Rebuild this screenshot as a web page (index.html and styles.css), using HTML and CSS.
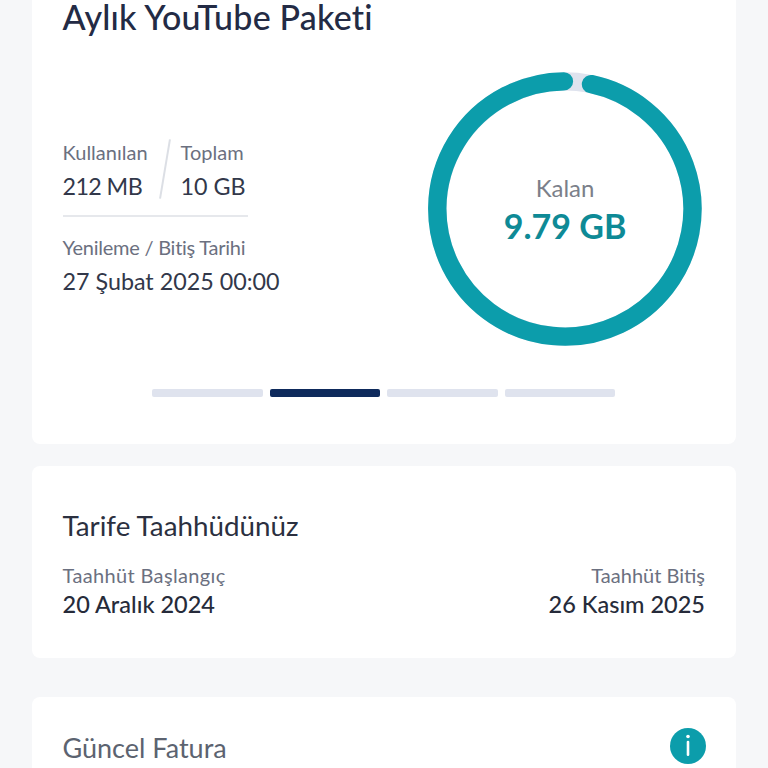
FILE: index.html
```html
<!DOCTYPE html>
<html lang="tr">
<head>
  <meta charset="UTF-8" />
  <meta name="viewport" content="width=device-width, initial-scale=1.0"/>
  <title>Aylık YouTube Paketi</title>
  <link rel="stylesheet" href="styles.css">
</head>
<body>
  <div class="page">
    <div class="card package">
      <h1 class="package-title">Aylık YouTube Paketi</h1>
      <div class="package-row">
        <div class="usage">
          <div class="usage-top">
            <div class="usage-col">
              <div class="label">Kullanılan</div>
              <div class="value value-narrow">212 MB</div>
            </div>
            <div class="slash"></div>
            <div class="usage-col">
              <div class="label">Toplam</div>
              <div class="value">10 GB</div>
            </div>
          </div>
          <div class="usage-bottom">
            <div class="label label-tight">Yenileme / Bitiş Tarihi</div>
            <div class="value">27 Şubat 2025 00:00</div>
          </div>
        </div>
        <div class="ring">
          <svg class="ring-svg" width="274" height="274" viewBox="0 0 274 274">
            <circle cx="137" cy="137" r="127.6" fill="none" stroke="#dfe3ee" stroke-width="18.4"/>
            <path d="M 163 12.1 A 127.6 127.6 0 1 1 135.9 9.4" fill="none" stroke="#0c9dab" stroke-width="18.4" stroke-linecap="round"/>
          </svg>
          <div class="ring-text">
            <div class="ring-label">Kalan</div>
            <div class="ring-value">9.79 GB</div>
          </div>
        </div>
      </div>
      <div class="pager">
        <span class="pager-bar"></span>
        <span class="pager-bar active"></span>
        <span class="pager-bar"></span>
        <span class="pager-bar"></span>
      </div>
    </div>

    <div class="card commitment">
      <h2 class="commitment-title">Tarife Taahhüdünüz</h2>
      <div class="commitment-row">
        <div>
          <div class="label label-wide">Taahhüt Başlangıç</div>
          <div class="date">20 Aralık 2024</div>
        </div>
        <div class="right">
          <div class="label">Taahhüt Bitiş</div>
          <div class="date">26 Kasım 2025</div>
        </div>
      </div>
    </div>

    <div class="card invoice">
      <h2 class="invoice-title">Güncel Fatura</h2>
      <svg class="info-icon" width="36" height="36" viewBox="0 0 36 36">
        <circle cx="18" cy="18" r="18" fill="#0c9dab"/>
        <circle cx="18" cy="8.5" r="1.8" fill="#fff"/>
        <rect x="16.7" y="12.8" width="2.6" height="15.2" rx="1.3" fill="#fff"/>
      </svg>
    </div>
  </div>
</body>
</html>
```

FILE: styles.css
```css
html, body {
  margin: 0;
  height: 100%;
  overflow: hidden;
}
body {
  font-family: Lato, "Noto Sans", sans-serif;
  background-color: #f6f7f9;
}
.page {
  padding: 0 32px;
}
.card {
  background-color: #fff;
  border-radius: 8px;
  padding: 0 31px 0 30.5px;
}
h1, h2 {
  margin: 0;
  font-weight: 400;
}

/* paket karti */
.package {
  height: 444px;
  border-radius: 0 0 8px 8px;
}
.package-title {
  font-size: 34px;
  line-height: 34px;
  font-weight: 500;
  color: #232b45;
  letter-spacing: 0.2px;
}
.package-row {
  display: flex;
  justify-content: space-between;
  padding-top: 38px;
}
.usage {
  padding-top: 68px;
}
.usage-top {
  display: flex;
  width: 185px;
  height: 75px;
  border-bottom: 2px solid #e6e8ec;
}
.usage-col {
  flex: none;
}
.slash {
  width: 1.5px;
  height: 60px;
  margin: -1px 15px 0 16.5px;
  background-color: #dcdfe5;
  transform: rotate(9.5deg);
}
.usage-bottom {
  padding-top: 18px;
}
.label {
  font-size: 20px;
  line-height: 24px;
  color: #6b7080;
}
.label-tight {
  letter-spacing: -0.25px;
}
.label-wide {
  letter-spacing: 0.35px;
}
.value {
  font-size: 23.3px;
  line-height: 28px;
  margin-top: 8px;
  color: #32384a;
}
.value-narrow {
  letter-spacing: -0.6px;
}
.ring {
  display: grid;
  width: 274px;
  height: 274px;
  margin-right: 3px;
  flex: none;
}
.ring-svg,
.ring-text {
  grid-area: 1 / 1;
}
.ring-text {
  align-self: center;
  text-align: center;
  padding-top: 2px;
}
.ring-label {
  font-size: 24px;
  line-height: 26px;
  color: #7b7f8a;
  margin-bottom: 5px;
}
.ring-value {
  font-size: 34px;
  line-height: 40px;
  font-weight: 700;
  color: #0e8a96;
}
.pager {
  display: flex;
  justify-content: center;
  gap: 7px;
  padding-top: 43px;
}
.pager-bar {
  width: 110.5px;
  height: 8px;
  border-radius: 2px;
  background-color: #dfe3ee;
}
.pager-bar.active {
  background-color: #0e2a5c;
}

/* taahhut karti */
.commitment {
  margin-top: 22px;
  height: 192px;
  padding-top: 44px;
  box-sizing: border-box;
}
.commitment-title {
  font-size: 27.8px;
  line-height: 32px;
  color: #2b3040;
}
.commitment-row {
  display: flex;
  justify-content: space-between;
  padding-top: 21px;
}
.right {
  text-align: right;
}
.date {
  font-size: 23.5px;
  line-height: 28px;
  font-weight: 500;
  margin-top: 3px;
  color: #262b3a;
}

/* fatura karti */
.invoice {
  margin-top: 39px;
  height: 71px;
  padding: 31px 30px 0 30.5px;
  display: flex;
  justify-content: space-between;
  align-items: flex-start;
  box-sizing: border-box;
  border-radius: 8px 8px 0 0;
}
.invoice-title {
  font-size: 27px;
  line-height: 36px;
  padding-top: 2px;
  color: #5c6370;
}
.info-icon {
  flex: none;
}
```
